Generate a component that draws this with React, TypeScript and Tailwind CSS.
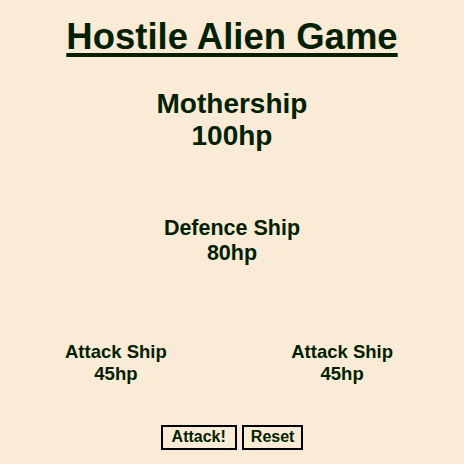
function Ship({ name, hp, className }: { name: string; hp: number; className: string }) {
  return (
    <div className={`text-center font-bold ${className}`}>
      <div>{name}</div>
      <div>{hp}hp</div>
    </div>
  )
}

function App() {
  return (
    <div
      className="min-h-[464px] bg-[#faebd7] text-[#022102] flex flex-col items-center"
      style={{ fontFamily: '"Liberation Sans", Arial, sans-serif' }}
    >
      <h1 className="mt-[14px] text-[36.5px] font-bold leading-tight underline decoration-[4px] underline-offset-[4px]">
        Hostile Alien Game
      </h1>

      <Ship name="Mothership" hp={100} className="mt-[28px] text-[28px] leading-[32px]" />

      <Ship name="Defence Ship" hp={80} className="mt-[64px] text-[21.5px] leading-[25px]" />

      <div className="mt-[75px] w-full flex justify-between pl-[65px] pr-[71px]">
        <Ship name="Attack Ship" hp={45} className="text-[18.5px] leading-[22px]" />
        <Ship name="Attack Ship" hp={45} className="text-[18.5px] leading-[22px]" />
      </div>

      <div className="mt-[40px] flex gap-[5px]">
        <button className="border-2 border-black px-[9px] h-[25px] text-[16px] font-bold leading-none">Attack!</button>
        <button className="border-2 border-black px-[7px] h-[25px] text-[16px] font-bold leading-none">Reset</button>
      </div>
    </div>
  )
}

export default App
